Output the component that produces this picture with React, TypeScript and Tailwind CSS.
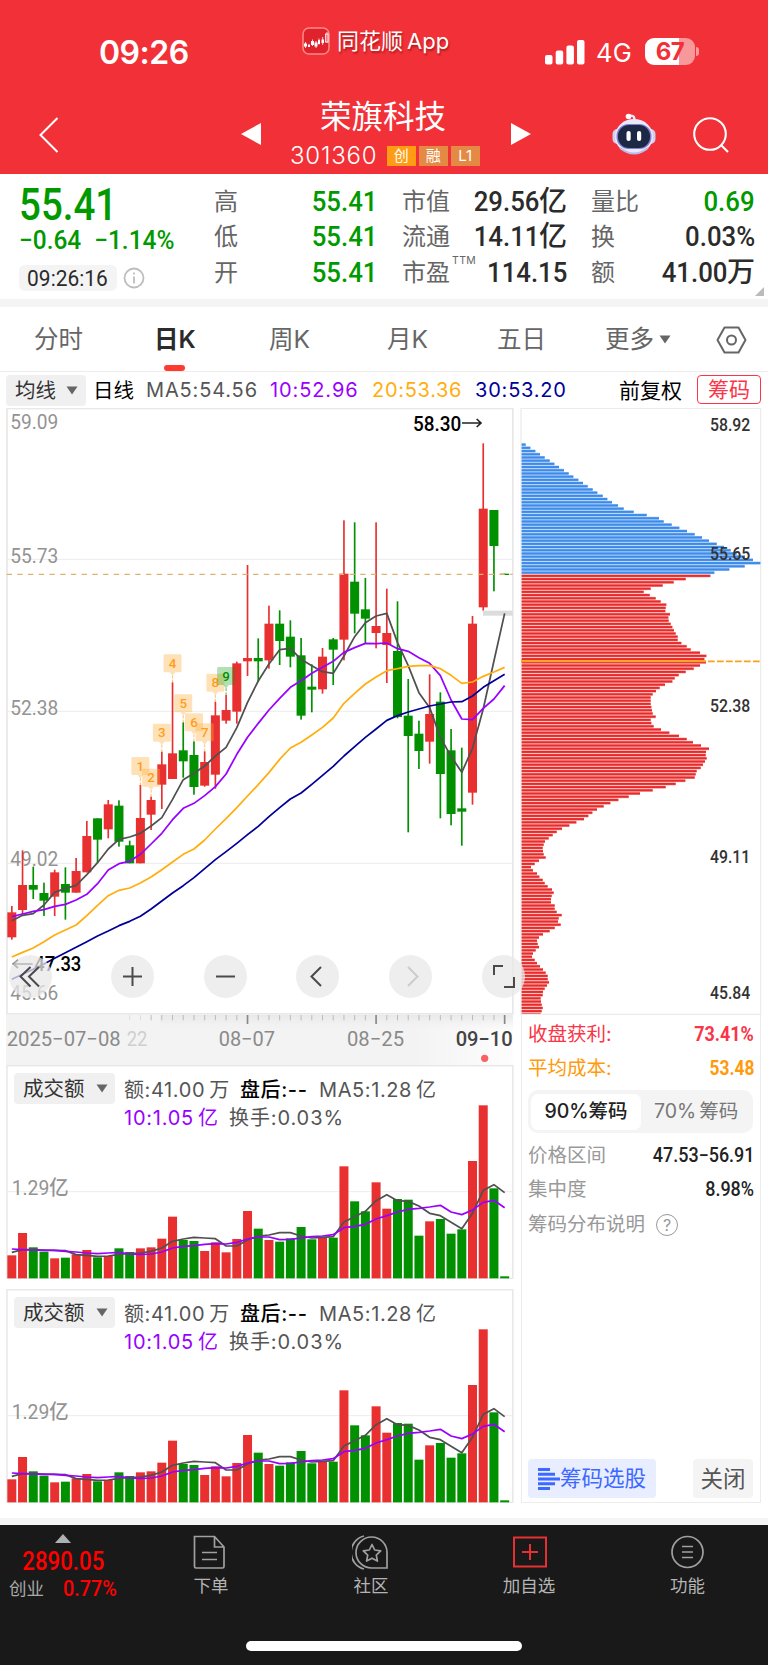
import React from "react";

const SANS = "font-[Inter,'Noto_Sans_CJK_SC',sans-serif]";
const DIN = "font-[Roboto,'Noto_Sans_CJK_SC',sans-serif]";
const RED = "#e83030";
const GREEN = "#009000";

/* Chart geometry is kept in thirds of a pixel, matching a 3x device grid. */
const STEP = 32.14;
const X0 = 35.5;
const cx = (i: number) => X0 + i * STEP;

type Candle = [string, number, number, number, number];

/* colour, high, body top, body bottom, low */
const candles: Candle[] = [
  ["r", 1518, 1537, 1612, 1619], ["r", 1351, 1455, 1530, 1542], ["g", 1400, 1455, 1469, 1497],
  ["g", 1448, 1479, 1502, 1548], ["r", 1409, 1417, 1490, 1548], ["g", 1402, 1452, 1478, 1559],
  ["r", 1374, 1413, 1478, 1478], ["r", 1263, 1308, 1417, 1417], ["g", 1255, 1255, 1319, 1388],
  ["r", 1200, 1213, 1288, 1315], ["g", 1201, 1217, 1325, 1340], ["g", 1322, 1336, 1390, 1390],
  ["r", 1155, 1254, 1390, 1390], ["r", 1190, 1200, 1244, 1290], ["r", 1055, 1093, 1154, 1227],
  ["r", 847, 1060, 1137, 1137], ["g", 967, 1051, 1084, 1133], ["g", 1024, 1065, 1161, 1184],
  ["r", 1054, 1086, 1157, 1160], ["r", 905, 946, 1124, 1166], ["r", 885, 930, 962, 971],
  ["r", 785, 790, 935, 971], ["r", 495, 774, 784, 828], ["g", 715, 774, 784, 845],
  ["r", 617, 671, 781, 806], ["g", 631, 671, 723, 795], ["g", 661, 710, 770, 802],
  ["g", 714, 766, 947, 959], ["g", 793, 860, 869, 937], ["r", 744, 770, 868, 881],
  ["g", 714, 718, 749, 855], ["r", 361, 521, 719, 781], ["g", 367, 545, 641, 700],
  ["g", 534, 628, 656, 731], ["r", 367, 678, 699, 745], ["r", 566, 699, 735, 849],
  ["g", 604, 753, 951, 955], ["g", 837, 947, 1008, 1297], ["g", 962, 1001, 1053, 1107],
  ["r", 823, 942, 1025, 1091], ["g", 877, 905, 1122, 1255], ["g", 987, 1051, 1242, 1276],
  ["g", 1043, 1225, 1235, 1337], ["r", 648, 671, 1178, 1214], ["r", 130, 326, 622, 632],
  ["g", 330, 330, 438, 574], ["g", 521, 521, 525, 525],
];

const ma5 = [1562, 1546, 1541, 1515, 1477, 1465, 1456, 1424, 1388, 1347, 1318, 1311, 1300, 1278, 1253, 1198, 1139, 1120, 1098, 1068, 1042, 983, 907, 843, 792, 749, 745, 778, 797, 815, 820, 768, 710, 668, 648, 640, 728, 797, 878, 923, 1012, 1069, 1117, 1045, 927, 783, 640];
const ma10 = [1550, 1542, 1534, 1529, 1519, 1513, 1500, 1483, 1451, 1410, 1391, 1384, 1363, 1332, 1300, 1259, 1225, 1210, 1187, 1160, 1122, 1063, 1012, 970, 930, 895, 862, 842, 820, 802, 784, 757, 743, 730, 731, 729, 746, 754, 773, 790, 827, 900, 957, 959, 925, 897, 857];
const ma20 = [1671, 1657, 1644, 1625, 1605, 1590, 1575, 1547, 1516, 1487, 1471, 1464, 1449, 1431, 1409, 1386, 1363, 1347, 1320, 1287, 1256, 1223, 1188, 1154, 1118, 1078, 1044, 1027, 1005, 982, 954, 910, 880, 852, 831, 812, 806, 799, 797, 797, 806, 826, 850, 846, 829, 816, 802];
const ma30 = [1738, 1723, 1708, 1692, 1675, 1658, 1642, 1625, 1608, 1593, 1577, 1564, 1549, 1527, 1503, 1479, 1457, 1433, 1406, 1379, 1355, 1330, 1304, 1279, 1250, 1223, 1197, 1179, 1153, 1126, 1099, 1068, 1040, 1012, 987, 961, 947, 936, 927, 918, 912, 906, 905, 888, 862, 842, 823];

const volTop = [616, 549, 592, 605, 625, 623, 613, 600, 622, 618, 595, 606, 595, 592, 566, 500, 570, 573, 603, 577, 607, 567, 483, 536, 570, 575, 565, 531, 568, 563, 563, 349, 454, 484, 397, 476, 447, 449, 557, 514, 507, 551, 538, 333, 166, 415, 679];
const volMa5 = [607, 599, 599, 600, 601, 602, 614, 616, 619, 618, 613, 610, 609, 604, 594, 574, 567, 562, 564, 566, 588, 588, 570, 558, 555, 548, 548, 558, 564, 562, 560, 516, 500, 484, 452, 434, 452, 454, 468, 490, 497, 517, 536, 490, 421, 404, 428];
const volMa10 = [597, 599, 600, 601, 601, 604, 606, 609, 611, 609, 607, 612, 613, 612, 606, 594, 589, 587, 583, 581, 582, 577, 567, 561, 561, 569, 568, 564, 560, 558, 554, 533, 529, 523, 507, 497, 486, 478, 475, 471, 466, 486, 494, 480, 457, 451, 473];

const chipBlue = [47, 61, 76, 90, 104, 119, 133, 147, 162, 176, 190, 205, 219, 233, 248, 262, 278, 292, 306, 324, 341, 371, 410, 447, 461, 485, 508, 531, 554, 576, 597, 620, 642, 662, 680, 705, 729, 751, 704, 658, 613];
const chipRed = [601, 527, 491, 458, 422, 401, 419, 437, 452, 469, 467, 466, 480, 475, 476, 482, 487, 492, 497, 503, 503, 514, 530, 542, 570, 589, 583, 588, 570, 551, 527, 506, 494, 487, 465, 449, 438, 428, 422, 422, 422, 424, 426, 428, 437, 422, 424, 431, 453, 478, 507, 530, 549, 573, 597, 588, 587, 590, 585, 579, 572, 560, 557, 554, 526, 497, 467, 428, 390, 356, 325, 301, 281, 261, 247, 235, 222, 199, 178, 156, 140, 128, 116, 105, 101, 98, 99, 101, 107, 87, 74, 63, 69, 81, 88, 98, 104, 113, 126, 131, 125, 123, 123, 134, 134, 140, 155, 146, 144, 152, 134, 119, 99, 87, 81, 83, 87, 77, 69, 66, 74, 81, 90, 99, 107, 113, 113, 117, 111, 104, 99, 98, 92, 93, 95, 98, 95, 92];
const chips = [...chipBlue, ...chipRed];
const CHIP_STEP = (1843 - 134) / (chips.length - 1);

const points = (ys: number[]) => ys.map((y, i) => `${cx(i)},${y}`).join(" ");

function Line({ ys, color }: { ys: number[]; color: string }) {
  return <polyline points={points(ys)} fill="none" stroke={color} strokeWidth="5.2" strokeLinejoin="round" />;
}

function Label({ x, y, w, size, fill, weight = 450, children }: { x: number; y: number; w: number; size: number; fill: string; weight?: number; children: string }) {
  return (
    <text x={x} y={y} textLength={w} lengthAdjust="spacingAndGlyphs" fontSize={size} fill={fill} fontWeight={weight} fontFamily="Roboto, 'Noto Sans CJK SC', sans-serif">
      {children}
    </text>
  );
}

function Down({ className = "" }: { className?: string }) {
  return (
    <svg viewBox="0 0 12 9" className={className}>
      <path d="M0.5 0.5h11L6 8.5z" fill="currentColor" />
    </svg>
  );
}

function StatusBar() {
  return (
    <div className="flex h-[96px] items-start text-white">
      <div className="mt-[37px] w-[302px] pl-[99px] text-[32px] leading-[32px] font-semibold tracking-[-0.5px]">09:26</div>
      <svg viewBox="0 0 28 28" className="mt-[27px] size-[28px]">
        <rect x="1" y="1" width="26" height="26" rx="6" fill="#e0222c" stroke="#fb8a8a" strokeWidth="1.5" />
        <path d="M2 16.500h3v3h-3zM6 17.500h2v2.500h-2zM9 14h3v4h-3zM12.500 15.500h3v4h-3zM16 13h2v4h-2zM19.500 12.500h2.500v3.500h-2.500z" fill="#fff" />
        <path d="M3.500 15v6M10.500 12.500v6.500M14 14v7M17 11.500v6M20.700 10v8M25 5v11" stroke="#fff" strokeWidth="0.800" />
        <rect x="23.500" y="7" width="2.600" height="8" fill="none" stroke="#fff" strokeWidth="0.800" />
      </svg>
      <div className="mt-[29px] ml-[7px] w-[208px] text-[22px] leading-[24px] whitespace-nowrap [text-shadow:1px_2px_2px_rgba(90,0,0,.45)]">同花顺<span className="ml-[4px] text-[22px]">App</span></div>
      <svg viewBox="0 0 40 25" className="mt-[40px] h-[25px] w-[40px]" fill="#fff">
        <rect x="0" y="15" width="7.5" height="9.5" rx="2" />
        <rect x="10.7" y="10.5" width="7.5" height="14" rx="2" />
        <rect x="21.4" y="5.5" width="7.5" height="19" rx="2" />
        <rect x="32" y="0" width="7.5" height="24.5" rx="2" />
      </svg>
      <div className="mt-[40px] ml-[11px] w-[49px] text-[25.500px] leading-[26px] tracking-[0.2px]">4G</div>
      <div className="mt-[38px] flex h-[27px] items-center">
        <div className="flex h-[27px] w-[50px] items-center justify-center rounded-[9px] bg-[linear-gradient(90deg,#fff_67%,#f7989b_67%)] text-[24px] font-bold tracking-[-0.5px] text-[#f23037]">67</div>
        <div className="ml-[1px] h-[9px] w-[3px] rounded-r-full bg-[#f7989b]" />
      </div>
    </div>
  );
}

function Robot() {
  return (
    <svg viewBox="0 0 44 42" className="h-[42px] w-[44px]">
      <path d="M17 3q7-2 5 7" fill="none" stroke="#e6e6fa" strokeWidth="2.4" />
      <circle cx="16.5" cy="3.5" r="2.8" fill="#fff" />
      <rect x="0.5" y="16" width="10" height="15" rx="5" fill="#cfcff0" />
      <rect x="33.5" y="16" width="10" height="15" rx="5" fill="#cfcff0" />
      <ellipse cx="22" cy="23.5" rx="19" ry="17.5" fill="#e9e9fb" />
      <path d="M8 35q14 11 28 0" fill="none" stroke="#b9bae6" strokeWidth="2" />
      <rect x="4.500" y="11" width="35" height="25" rx="12" fill="#7f7fd6" />
      <rect x="6" y="12" width="32" height="23" rx="11" fill="#1d2844" />
      <rect x="14.500" y="18" width="4.200" height="10" rx="2.100" fill="#fff" />
      <rect x="25" y="18" width="4.200" height="10" rx="2.100" fill="#fff" />
    </svg>
  );
}

function TitleBar() {
  return (
    <div className="flex h-[78px] items-start text-white">
      <svg viewBox="0 0 20 36" className="mt-[21px] ml-[39px] h-[36px] w-[20px]">
        <path d="M18.500 1L1.500 18l17 17" fill="none" stroke="#fff" strokeWidth="2" />
      </svg>
      <svg viewBox="0 0 20 22" className="mt-[27px] ml-[182px] h-[22px] w-[20px]"><path d="M0 11L20 0v22z" fill="#fff" /></svg>
      <div className="ml-[29px] flex w-[190px] flex-col">
        <div className="mt-[4px] pl-[30px] text-[31.500px] leading-[34px]">荣旗科技</div>
        <div className="mt-[11px] flex h-[22px] items-center">
          <span className="w-[97px] text-[24px] leading-[22px] font-light tracking-[0.8px]">301360</span>
          <span className="mr-[3.500px] flex h-[20px] w-[28.500px] items-center justify-center bg-[#ff9c14] text-[15px]">创</span>
          <span className="mr-[3.500px] flex h-[20px] w-[28.500px] items-center justify-center bg-[#e58a44] text-[15px]">融</span>
          <span className="flex h-[20px] w-[28.500px] items-center justify-center bg-[#e58a44] text-[15px]">L1</span>
        </div>
      </div>
      <svg viewBox="0 0 20 22" className="mt-[27px] ml-[31px] h-[22px] w-[20px]"><path d="M20 11L0 0v22z" fill="#fff" /></svg>
      <div className="mt-[17px] ml-[81px]"><Robot /></div>
      <svg viewBox="0 0 37 37" className="mt-[21px] ml-[37px] size-[37px]" fill="none" stroke="#fff" strokeWidth="2.100">
        <circle cx="17" cy="17" r="15.800" />
        <path d="M28.500 28.500l6.500 6.500" />
      </svg>
    </div>
  );
}

function Stat({ label, sup, value, unit, green }: { label: string; sup?: string; value: string; unit?: string; green?: boolean }) {
  return (
    <div className="flex h-[35.500px] items-center justify-between">
      <span className="flex text-[24px] leading-[24px] whitespace-nowrap text-[#666]">
        {label}
        {sup ? <sup className="mt-[-1px] ml-[2px] text-[10.500px] leading-[12px] tracking-[0.4px]">{sup}</sup> : null}
      </span>
      <span className={`${DIN} mr-[-1px] flex items-center text-[28px] leading-none font-medium whitespace-nowrap ${green ? "text-[#009900]" : "text-[#2b2b2b]"}`}>
        <span className="origin-right scale-x-[.92]">{value}</span>
        {unit ? <span>{unit}</span> : null}
      </span>
    </div>
  );
}

function Quote() {
  return (
    <div className="relative flex h-[125px] bg-white">
      <div className="w-[214px] pl-[19px] text-[#009900]">
        <div className={`${DIN} mt-[15px] h-[33px] origin-left scale-x-[.885] text-[43.500px] leading-[33px] font-medium`}>55.41</div>
        <div className={`${DIN} mt-[8px] flex origin-left scale-x-[.94] text-[26px] leading-[20px] font-medium whitespace-nowrap`}>
          <span className="w-[80px]">−0.64</span><span>−1.14%</span>
        </div>
        <div className="mt-[15px] flex items-center">
          <div className="flex h-[26px] w-[98px] items-center justify-center rounded-[6px] bg-[#f4f4f4]">
            <span className={`${DIN} scale-x-[.93] pr-[2px] text-[22.500px] leading-none font-[450] text-[#2b2b2b]`}>09:26:16</span>
          </div>
          <svg viewBox="0 0 22 22" className="ml-[6px] size-[22px]" fill="none" stroke="#bdbdbd" strokeWidth="1.800">
            <circle cx="11" cy="11" r="9.500" /><path d="M11 9.500v7M11 5.500v2" />
          </svg>
        </div>
      </div>
      <div className="w-[162px] pt-[10px]">
        <Stat label="高" value="55.41" green />
        <Stat label="低" value="55.41" green />
        <Stat label="开" value="55.41" green />
      </div>
      <div className="ml-[26px] w-[164px] pt-[10px]">
        <Stat label="市值" value="29.56" unit="亿" />
        <Stat label="流通" value="14.11" unit="亿" />
        <Stat label="市盈" sup="TTM" value="114.15" />
      </div>
      <div className="ml-[25px] w-[163px] pt-[10px]">
        <Stat label="量比" value="0.69" green />
        <Stat label="换" value="0.03%" />
        <Stat label="额" value="41.00" unit="万" />
      </div>
      <svg viewBox="0 0 9 9" className="absolute right-[4px] bottom-[3px] size-[9px]"><path d="M9 0v9H0z" fill="#bbb" /></svg>
    </div>
  );
}

function Tabs() {
  return (
    <div className="flex h-[65px] items-center border-b border-[#ececec] bg-white pt-[1px] text-[24.500px] leading-none text-[#666]">
      <span className="w-[123px] pl-[34px]">分时</span>
      <span className="relative flex h-full w-[146px] items-center pl-[31px] font-semibold text-[#2b2b2b]">
        日K
        <i className="absolute bottom-0 left-[41px] h-[6px] w-[21px] rounded-[3px] bg-[#ff3b30]" />
      </span>
      <span className="w-[118px]">周K</span>
      <span className="w-[110px]">月K</span>
      <span className="w-[108px]">五日</span>
      <span className="flex w-[111px] items-center">更多<Down className="ml-[5px] h-[9px] w-[12px]" /></span>
      <svg viewBox="0 0 31 28" className="h-[28px] w-[31px]" fill="none" stroke="#666" strokeWidth="2">
        <path d="M8.500 1.500h14l7 12.500-7 12.500h-14L1.500 14z" strokeLinejoin="round" /><circle cx="15.500" cy="14" r="4.500" />
      </svg>
    </div>
  );
}

function MaRow() {
  return (
    <div className="flex h-[36px] items-start bg-white pt-[3px] pl-[6px] text-[20px] leading-[31px] whitespace-nowrap">
      <div className="flex h-[31px] w-[80px] items-center rounded-[4px] bg-[#f0f0f0] pl-[9px] text-[20.500px] text-[#333]">
        均线<Down className="ml-[10px] h-[9px] w-[12px] text-[#666]" />
      </div>
      <span className="w-[60px] pl-[7px] text-[20.500px] text-black">日线</span>
      <span className="w-[124px] tracking-[0.850px] text-[#555]">MA5:54.56</span>
      <span className="w-[102px] tracking-[0.900px] text-[#9900ff]">10:52.96</span>
      <span className="w-[103px] tracking-[0.700px] text-[#ffae0d]">20:53.36</span>
      <span className="w-[144px] tracking-[0.800px] text-[#000099]">30:53.20</span>
      <span className="w-[78px] text-[21px] text-black">前复权</span>
      <span className="flex h-[29px] w-[64px] items-center justify-center rounded-[4px] border border-[#fb3448] text-[21px] text-[#fb3448]">筹码</span>
    </div>
  );
}

function Tag({ i, n, green }: { i: number; n: number; green?: boolean }) {
  const x = cx(i);
  const high = candles[i][1];
  const t = high - 84;
  const c = green ? GREEN : "#ff9d1c";
  return (
    <g>
      <path d={`M${x - 23} ${t}h46q4 0 4 4v46q0 4-4 4h-15l-8 11-8-11h-15q-4 0-4-4v-46q0-4 4-4z`} fill={green ? "#009900" : "#ffae3d"} opacity={green ? 0.3 : 0.37} />
      <path d={`M${x} ${t + 64}V${high}`} stroke={c} strokeWidth="3" strokeDasharray="8 4" opacity=".65" />
      <text x={x} y={t + 41} textAnchor="middle" fontSize="40" fontWeight="500" fill={c} fontFamily="Roboto, sans-serif">{n}</text>
    </g>
  );
}

function KLine() {
  return (
    <svg viewBox="18 24 1527 1821" className="block h-[607px] w-[509px]">
      <rect x="21" y="25.500" width="1517.500" height="1816" fill="none" stroke="#e8e8e8" strokeWidth="5" />
      {[478, 934, 1390].map((y) => <path key={y} d={`M22 ${y}H1538`} stroke="#ececec" strokeWidth="3" />)}
      <Label x={31} y={87} w={144} size={63} fill="#939393">59.09</Label>
      <Label x={31} y={489} w={144} size={63} fill="#939393">55.73</Label>
      <Label x={31} y={944} w={144} size={63} fill="#939393">52.38</Label>
      <Label x={31} y={1399} w={144} size={63} fill="#939393">49.02</Label>
      <Label x={31} y={1801} w={144} size={63} fill="#939393">45.66</Label>
      {candles.map(([c, hi, top, bot, lo], i) => {
        const color = c === "r" ? RED : GREEN;
        return (
          <g key={i} fill={color}>
            <rect x={cx(i) - 2.500} y={hi} width="5" height={lo - hi} />
            <rect x={cx(i) - 13.500} y={top} width="27" height={bot - top} />
          </g>
        );
      })}
      <rect x="1449" y="632" width="89" height="15" fill="#dcdcdc" />
      <path d="M20 523H1538" stroke="#dfb273" strokeWidth="3.500" strokeDasharray="16 16.140" />
      <Line ys={ma5} color="#505050" />
      <Line ys={ma10} color="#9900ff" />
      <Line ys={ma20} color="#ffae0d" />
      <Line ys={ma30} color="#000099" />
      {[1, 2, 3, 4, 5, 6, 7, 8].map((n) => <Tag key={n} i={n + 11} n={n} />)}
      <Tag i={20} n={9} green />
      <Label x={1239} y={92} w={145} size={63} fill="#000" weight={500}>58.30</Label>
      <path d="M1386 69h56M1430 57l13 12-13 12" fill="none" stroke="#222" strokeWidth="5" />
      <Label x={103} y={1714} w={141} size={58} fill="#000" weight={500}>47.33</Label>
      <path d="M98 1692H40M54 1680l-14 12 14 12" fill="none" stroke="#222" strokeWidth="5" />
    </svg>
  );
}

function ToolButton({ className, dim, children }: { className: string; dim?: boolean; children: React.ReactNode }) {
  return (
    <div className={`absolute top-[546.500px] flex size-[43px] items-center justify-center rounded-full bg-[#e8e8e8]/75 ${className}`}>
      <svg viewBox="0 0 43 43" className="size-[43px]" fill="none" stroke={dim ? "#ccc" : "#4a4a4a"} strokeWidth="2">{children}</svg>
    </div>
  );
}

function Axis() {
  const ticks = Array.from({ length: 36 }, (_, k) => k + 11);
  return (
    <svg viewBox="18 0 1527 150" className="block h-[50px] w-[509px]">
      <defs>
        <linearGradient id="axisBg" x1="0" x2="1"><stop offset="0" stopColor="#f3f3f3" /><stop offset=".8" stopColor="#f3f3f3" /><stop offset="1" stopColor="#fdfdfd" /></linearGradient>
        <linearGradient id="axisFade" x1="0" x2="0" y1="0" y2="1"><stop offset="0" stopColor="#e9e9e9" /><stop offset="1" stopColor="#f3f3f3" stopOpacity="0" /></linearGradient>
      </defs>
      <rect x="18" y="0" width="1521" height="150" fill="url(#axisBg)" />
      <rect x="480" y="0" width="1059" height="50" fill="url(#axisFade)" />
      {ticks.map((i) => {
        const major = i === 22 || i === 34 || i === 46;
        return <path key={i} d={`M${cx(i)} 0V${major ? 27 : 16}`} stroke={major ? "#888" : i < 13 ? "#ddd" : "#bbb"} strokeWidth={major ? 5 : 3} />;
      })}
      <Label x={20} y={94} w={342} size={62} fill="#8a8a8a">2025−07−08</Label>
      <Label x={380} y={94} w={62} size={62} fill="#cfcfcf">22</Label>
      <Label x={656} y={94} w={169} size={62} fill="#8a8a8a">08−07</Label>
      <Label x={1041} y={94} w={171} size={62} fill="#8a8a8a">08−25</Label>
      <Label x={1367} y={94} w={171} size={62} fill="#444" weight={500}>09−10</Label>
      <circle cx="1454" cy="130" r="11" fill="#f86262" />
    </svg>
  );
}

function Volume() {
  return (
    <div className="relative h-[214px] w-[509px] bg-white">
      <svg viewBox="18 45 1527 642" className="block h-[214px] w-[509px]">
        <rect x="21" y="47" width="1517.500" height="638" fill="none" stroke="#e8e8e8" strokeWidth="4.500" />
        <path d="M22 425H1538" stroke="#ececec" strokeWidth="3" />
        <Label x={35} y={434} w={171} size={62} fill="#939393">1.29亿</Label>
        {volTop.map((y, i) => <rect key={i} x={cx(i) - 13.500} y={y} width="27" height={685 - y} fill={candles[i][0] === "r" ? RED : GREEN} />)}
        <Line ys={volMa5} color="#505050" />
        <Line ys={volMa10} color="#9900ff" />
      </svg>
      <div className="absolute inset-x-0 top-[8px] flex pl-[8px] text-[20px] leading-[28px] tracking-[0.600px] whitespace-nowrap text-[#555]">
        <div className="flex h-[31px] w-[101px] items-center rounded-[4px] bg-[#f0f0f0] pl-[9px] text-[20.500px] tracking-normal text-[#333]">
          成交额<Down className="ml-[11px] h-[9px] w-[12px] text-[#666]" />
        </div>
        <div className="ml-[9px] flex flex-col pt-[3px]">
          <div className="flex">
            <span className="w-[116px]">额:41.00<span className="ml-[4px]">万</span></span>
            <span className="w-[79px] font-medium text-black">盘后:--</span>
            <span>MA5:1.28<span className="ml-[4px]">亿</span></span>
          </div>
          <div className="flex">
            <span className="w-[105px] tracking-[0.750px] text-[#9900ff]">10:1.05<span className="ml-[4px]">亿</span></span>
            <span className="tracking-[0.900px]">换手:0.03%</span>
          </div>
        </div>
      </div>
    </div>
  );
}

function ChipChart() {
  return (
    <svg viewBox="30 24 726 1821" className="block h-[607px] w-[242px]">
      <path d="M33 1845V25H752V1845" fill="none" stroke="#ececec" strokeWidth="4" />
      {chips.map((x, i) => {
        const y = 134 + i * CHIP_STEP;
        const blue = i < chipBlue.length;
        return (
          <g key={i}>
            <rect x="35" y={y - 4.500} width={x - 35} height="9" fill={blue ? "#9cc4f5" : "#f6a3a3"} />
            <rect x="35" y={y - 3} width={x - 35} height="6" fill={blue ? "#3c8aea" : "#e92a2a"} />
          </g>
        );
      })}
      <path d="M33 784H588" stroke="#f7a21a" strokeWidth="6" />
      <path d="M594 784H750" stroke="#f7a21a" strokeWidth="5" strokeDasharray="20 7" />
      <Label x={600} y={94} w={121} size={54} fill="#333" weight={500}>58.92</Label>
      <Label x={600} y={480} w={121} size={54} fill="#333" weight={500}>55.65</Label>
      <Label x={600} y={935} w={121} size={54} fill="#333" weight={500}>52.38</Label>
      <Label x={600} y={1390} w={121} size={54} fill="#333" weight={500}>49.11</Label>
      <Label x={600} y={1798} w={121} size={54} fill="#333" weight={500}>45.84</Label>
      <path d="M33 1843H752" stroke="#ececec" strokeWidth="4" />
    </svg>
  );
}

function InfoRow({ label, value, labelClass, valueClass }: { label: string; value: string; labelClass: string; valueClass: string }) {
  return (
    <div className="flex h-[34px] items-center justify-between text-[19.500px] leading-none">
      <span className={labelClass}>{label}</span>
      <span className={`${DIN} mr-[-1px] origin-right text-[19.500px] ${valueClass}`}>{value}</span>
    </div>
  );
}

function ChipInfo() {
  return (
    <div className="flex h-[488px] w-[240px] flex-col border-x border-b border-[#ececec] pt-[3px] pr-[7px] pl-[6px]">
      <InfoRow label="收盘获利:" value="73.41%" labelClass="text-[#fb3448]" valueClass="scale-x-[.92] font-bold text-[#fb3448]" />
      <InfoRow label="平均成本:" value="53.48" labelClass="text-[#ff9a0a]" valueClass="scale-x-[.89] font-bold text-[#ff9a0a]" />
      <div className="mt-[4px] flex h-[43px] items-center rounded-[10px] bg-[#f4f4f4] p-[3px] text-[19.500px]">
        <span className="flex h-[36px] w-[110px] items-center justify-center rounded-[7px] bg-white font-medium whitespace-nowrap text-[#222]">90%筹码</span>
        <span className="ml-[13px] whitespace-nowrap text-[#777]">70%<span className="ml-[3px]">筹码</span></span>
      </div>
      <div className="h-[6px]" />
      <InfoRow label="价格区间" value="47.53−56.91" labelClass="text-[#999]" valueClass="scale-x-[.92] font-medium text-[#222]" />
      <InfoRow label="集中度" value="8.98%" labelClass="text-[#999]" valueClass="scale-x-[.92] font-medium text-[#222]" />
      <div className="flex h-[36px] items-center text-[19.500px] text-[#999]">
        筹码分布说明
        <span className="ml-[11px] flex size-[22px] items-center justify-center rounded-full border-[1.500px] border-[#999] text-[16px] leading-none">?</span>
      </div>
      <div className="mt-auto mb-[4px] flex justify-between">
        <div className="flex h-[39px] w-[128px] items-center rounded-[4px] bg-[#e8edff] pl-[10px] text-[21.500px] whitespace-nowrap text-[#3c69ff]">
          <svg viewBox="0 0 22 22" className="h-[22px] w-[22px] shrink-0" stroke="#3c69ff" strokeWidth="3">
            <path d="M0 1.500h12M0 6.200h17M0 11h22M0 15.800h17M0 20.500h12" />
          </svg>
          筹码选股
        </div>
        <div className="flex h-[39px] w-[60px] items-center justify-center rounded-[4px] bg-[#f4f4f4] text-[22.500px] text-[#555]">关闭</div>
      </div>
    </div>
  );
}

function NavItem({ label, className, children }: { label: string; className: string; children: React.ReactNode }) {
  return (
    <div className={`flex flex-col items-center pt-[8px] text-[17.500px] leading-[20px] text-[#b4b4b4] ${className}`}>
      <svg viewBox="0 0 38 38" className="size-[38px]" fill="none" stroke="#a0a0a0" strokeWidth="1.700">{children}</svg>
      <span className="mt-[5px]">{label}</span>
    </div>
  );
}

function NavBar() {
  return (
    <div className="flex h-[140px] flex-col items-center bg-[#191919]">
      <div className="flex h-[116px] w-full items-start">
        <div className="flex w-[131px] flex-col">
          <svg viewBox="0 0 16 9" className="mt-[9px] ml-[55px] h-[9px] w-[16px]"><path d="M8 0l8 9H0z" fill="#b0b0b0" /></svg>
          <div className={`${DIN} mt-[6px] origin-left scale-x-[.89] pl-[25px] text-[25px] leading-[26px] font-medium text-[#ff0000]`}>2890.05</div>
          <div className="mt-[4px] flex items-center pl-[9px] text-[17.500px] leading-[20px] text-[#a8a8a8]">
            <span className="w-[54px]">创业</span>
            <span className={`${DIN} origin-left scale-x-[.9] text-[22px] font-medium text-[#ff0000]`}>0.77%</span>
          </div>
        </div>
        <NavItem label="下单" className="w-[160px]">
          <path d="M2.500 3.500h20l9.500 10.500v19.500q0 1.500-1.500 1.500H4q-1.500 0-1.500-1.500z M22.500 3.500v10.500h9.500M10 19.500h15M10 26.500h15" />
        </NavItem>
        <NavItem label="社区" className="w-[160px]">
          <path d="M35 35H20A15.500 15.500 0 1 1 35 20zM12 3A17 17 0 0 0 12 36" />
          <path d="M20 11.500l2.700 5.500 6 .900-4.400 4.200 1.100 6-5.400-2.900-5.400 2.900 1.100-6-4.400-4.200 6-.900z" strokeLinejoin="round" />
        </NavItem>
        <NavItem label="加自选" className="w-[156px]">
          <path d="M4 4.500h32v29H4zM20 11v16M12 19h16" stroke="#e93030" strokeWidth="2" />
        </NavItem>
        <NavItem label="功能" className="w-[161px]">
          <circle cx="18.500" cy="19" r="15.500" /><path d="M13 13.500h11M13 19h11M13 24.500h11" />
        </NavItem>
      </div>
      <div className="h-[10px] w-[276px] rounded-full bg-white" />
    </div>
  );
}

export default function App() {
  return (
    <div className={`${SANS} flex h-[1665px] w-[768px] flex-col overflow-hidden bg-white`}>
      <header className="h-[174px] bg-[#f23037]">
        <StatusBar />
        <TitleBar />
      </header>
      <Quote />
      <div className="h-[8px] bg-[#f4f4f4]" />
      <Tabs />
      <MaRow />
      <main className="flex h-[1110px] pl-[6px]">
        <div className="relative w-[514px]">
          <KLine />
          <Axis />
          <Volume />
          <div className="h-[10px]" />
          <Volume />
          <ToolButton className="left-[3px]"><path d="M21.500 12L11.500 21.500l10 10M30 12L20 21.500l10 10" /></ToolButton>
          <ToolButton className="left-[105px]"><path d="M21.500 12v19M12 21.500h19" /></ToolButton>
          <ToolButton className="left-[198px]"><path d="M12 21.500h19" /></ToolButton>
          <ToolButton className="left-[290px]"><path d="M25 12l-9.500 9.500 9.500 9.500" /></ToolButton>
          <ToolButton className="left-[383px]" dim><path d="M19 12l9.500 9.500-9.500 9.500" /></ToolButton>
          <ToolButton className="left-[476px] z-10"><path d="M12 20v-9h9M32 22v10h-10" /></ToolButton>
        </div>
        <div className="w-[242px]">
          <ChipChart />
          <div className="pl-[1px]"><ChipInfo /></div>
        </div>
      </main>
      <div className="h-[7px] shrink-0 bg-[#f4f4f4]" />
      <NavBar />
    </div>
  );
}
